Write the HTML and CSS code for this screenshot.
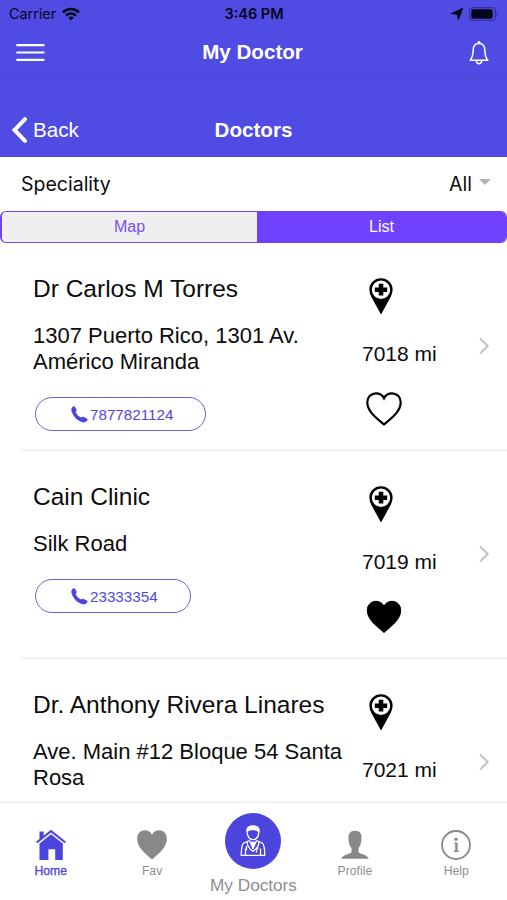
FILE: index.html
```html
<!DOCTYPE html>
<html lang="en">
<head>
  <meta charset="UTF-8" />
  <meta name="viewport" content="width=device-width, initial-scale=1.0" />
  <title>My Doctor</title>
  <link rel="stylesheet" href="styles.css">
</head>
<body>

  <!-- Shared icons -->
  <svg class="sprite" width="0" height="0">
    <symbol id="pin" viewBox="0 0 24 37">
      <path fill-rule="evenodd" d="M12 .3C5.4.3.4 5.200.4 11.600c0 2.700.8 4.900 2.100 7.600L12 36.500l9.500-17.300c1.300-2.700 2.100-4.900 2.100-7.600C23.600 5.200 18.600.3 12 .3zM12 2.500a9.200 9.200 0 1 1 0 18.400a9.200 9.200 0 1 1 0-18.400z"/>
      <path d="M9.700 5.700h4.600v3.700h3.900v4.500h-3.900v3.700H9.700v-3.700H5.800V9.400h3.900z"/>
    </symbol>
    <symbol id="heart" viewBox="0 0 36 34">
      <path d="M18 32.500C10 25.500 1.300 19.500 1.300 10.300C1.300 5 5.200 1.300 10 1.300C13.300 1.300 16.500 3 18 6.200C19.500 3 22.700 1.300 26 1.300C30.800 1.300 34.700 5 34.700 10.300C34.700 19.500 26 25.500 18 32.500z"/>
    </symbol>
    <symbol id="phone" viewBox="0 0 17 17">
      <path d="M1.200 1.200C2.300.2 3.400 0 4 .8l1.500 2.700c.4.900.1 1.500-.8 2.300c.7 2.500 2.800 4.600 5.600 5.800c.9-1 1.600-1.100 2.400-.7l3.100 1.500c1 .6 1 1.300.4 2.200c-1 1.500-2.700 2.200-4.600 1.700C6.200 14.800 1.700 10.200.4 4.500C.2 3.200.4 2 1.200 1.200z"/>
    </symbol>
    <symbol id="chevron" viewBox="0 0 10 18">
      <path d="M1 1.500L8.700 9L1 16.500" fill="none" stroke="#c4c4c6" stroke-width="2"/>
    </symbol>
  </svg>

  <header>
    <div class="status">
      <div class="carrier">
        <span>Carrier</span>
        <svg width="18" height="14" viewBox="0 0 18 14" fill="none" stroke="#07071c" stroke-width="2.500">
          <path d="M1 5.300C5.500.9 12.500.9 17 5.300"/>
          <path d="M4 8.500C6.800 5.800 11.200 5.800 14 8.500"/>
          <path d="M6.200 10.600C7.800 9.100 10.200 9.100 11.800 10.600L9 13.500z" fill="#07071c" stroke="none"/>
        </svg>
      </div>
      <strong>3:46 PM</strong>
      <div class="battery">
        <svg width="12" height="12" viewBox="0 0 12 12"><path d="M11.800.2L7.400 11.700L6 6.300L.3 5.600z" fill="#07071c" stroke="#07071c" stroke-width=".8" stroke-linejoin="round"/></svg>
        <svg width="30" height="14" viewBox="0 0 30 14">
          <rect x=".6" y=".6" width="25.800" height="12.800" rx="3.500" fill="none" stroke="#3530a0" stroke-width="1.200"/>
          <rect x="2.300" y="2.300" width="21.400" height="9.400" rx="1.800" fill="#07071c"/>
          <path d="M27.800 4.800c1.700.7 1.700 3.700 0 4.400z" fill="#3530a0"/>
        </svg>
      </div>
    </div>

    <div class="topbar">
      <svg width="29" height="19" viewBox="0 0 29 19" stroke="#fff" stroke-width="2.200" stroke-linecap="round"><path d="M1.200 2.200h26.400M1.200 9.500h26.400M1.200 16.800h26.400"/></svg>
      <h1>My Doctor</h1>
      <svg class="bell" width="20" height="24" viewBox="0 0 20 24" fill="none" stroke="#fff" stroke-width="1.500" stroke-linejoin="round">
        <path d="M10 2.400C6 2.400 4.300 5.300 4.200 9C4.100 14 3.400 16.500 1.200 19.300h17.600C16.600 16.500 15.900 14 15.800 9C15.700 5.300 14 2.400 10 2.400z"/>
        <path d="M9.300 2.200V1.100h1.400v1.100M7.400 20c.2 3.600 5 3.600 5.200 0"/>
      </svg>
    </div>

    <div class="subbar">
      <a href="#" class="back">
        <svg width="16" height="26" viewBox="0 0 16 26"><path d="M14 2.200L3.500 13l10.500 10.800" fill="none" stroke="#fff" stroke-width="4" stroke-linecap="round"/></svg>
        <span>Back</span>
      </a>
      <h2>Doctors</h2>
    </div>
  </header>

  <div class="filter">
    <span>Speciality</span>
    <div class="select">All</div>
  </div>

  <div class="segment">
    <button>Map</button>
    <button class="active">List</button>
  </div>

  <main>
    <article class="doctor">
      <div class="info">
        <h3>Dr Carlos M Torres</h3>
        <p>1307 Puerto Rico, 1301 Av. Américo Miranda</p>
        <a href="#" class="call"><svg width="17" height="17"><use href="#phone"/></svg>7877821124</a>
      </div>
      <div class="place">
        <svg class="pin" width="24" height="37"><use href="#pin"/></svg>
        <span>7018 mi</span>
        <svg class="heart outline" width="36" height="34"><use href="#heart"/></svg>
      </div>
      <svg class="chevron" width="10" height="18"><use href="#chevron"/></svg>
    </article>

    <article class="doctor">
      <div class="info">
        <h3>Cain Clinic</h3>
        <p>Silk Road</p>
        <a href="#" class="call"><svg width="17" height="17"><use href="#phone"/></svg>23333354</a>
      </div>
      <div class="place">
        <svg class="pin" width="24" height="37"><use href="#pin"/></svg>
        <span>7019 mi</span>
        <svg class="heart" width="36" height="34"><use href="#heart"/></svg>
      </div>
      <svg class="chevron" width="10" height="18"><use href="#chevron"/></svg>
    </article>

    <article class="doctor">
      <div class="info">
        <h3>Dr. Anthony Rivera Linares</h3>
        <p>Ave. Main #12 Bloque 54 Santa Rosa</p>
      </div>
      <div class="place">
        <svg class="pin" width="24" height="37"><use href="#pin"/></svg>
        <span>7021 mi</span>
      </div>
      <svg class="chevron" width="10" height="18"><use href="#chevron"/></svg>
    </article>
  </main>

  <nav class="tabs">
    <a href="#" class="current">
      <svg width="32" height="32" viewBox="0 0 32 32" fill="#4b45de">
        <path d="M4.500 2.600h4.200v5L4.500 11.300z"/>
        <path d="M16 .8L31 12.800l-1.300 1.500L16 3.600L2.300 14.300L1 12.800z"/>
        <path d="M16 5.200l11.800 9.300V31h-7.600V20.200h-6.800V31H4.500V14.500z"/>
      </svg>
      <span>Home</span>
    </a>
    <a href="#">
      <svg width="32" height="32" viewBox="0 0 36 34" preserveAspectRatio="none" fill="#888"><use href="#heart" width="36" height="34"/></svg>
      <span>Fav</span>
    </a>
    <a href="#" class="main-tab">
      <div class="circle">
        <svg width="26" height="34" viewBox="0 0 26 34" fill="none" stroke="#fff" stroke-width="1.300" stroke-linejoin="round">
          <path d="M7 6.500C6 .2 20 .2 19 6.500L18.600 10c-1 4.500-3.200 5.700-5.600 5.700S8.400 14.500 7.400 10z"/>
          <path d="M7.200 7.500C7 1 19 1 18.800 7.500C16.800 4.800 14 5.600 11.600 5.500C9.500 5.400 8 6 7.200 7.500z" fill="#fff"/>
          <path d="M9.500 16.500L3.800 19C1.800 20.200 1.300 25 1.200 31.300h23.600C24.700 25 24.200 20.200 22.200 19l-5.700-2.500"/>
          <path d="M9.500 16.500l3.500 8l3.500-8M7.300 17.800c-.5 4 1.500 6.500 5.700 9.500c4.200-3 6.200-5.500 5.700-9.500M5.500 24.500v6.500M20.500 24.500v6.500"/>
          <path d="M11.300 18.500h3.400L13 24z" fill="#fff"/>
          <path d="M6.500 22v4.300M18.500 23.500c-2 1-2.300 3-2 5"/>
        </svg>
      </div>
      <span>My Doctors</span>
    </a>
    <a href="#">
      <svg width="32" height="32" viewBox="0 0 32 32" fill="#888">
        <path d="M16 1.800c-4.800 0-6.900 3.400-6.500 7.600C9.700 13.500 10.400 17 12.500 19v4.200c-1 1.700-8.900 2.400-10.300 6.600H29.800C28.400 25.600 20.500 24.900 19.500 23.200V19c2.100-2 2.800-5.500 3-9.600C22.900 5.200 20.800 1.800 16 1.800z"/>
      </svg>
      <span>Profile</span>
    </a>
    <a href="#">
      <svg width="32" height="32" viewBox="0 0 32 32" fill="#888">
        <circle cx="16" cy="16" r="14" fill="none" stroke="#888" stroke-width="1.800"/>
        <circle cx="16" cy="10.200" r="1.700"/>
        <path d="M13.900 13.400h3.700v8.300h1.300v1.200h-5v-1.200h1.300v-7.100h-1.300z"/>
      </svg>
      <span>Help</span>
    </a>
  </nav>

</body>
</html>
```
FILE: styles.css
```css
* { box-sizing: border-box; margin: 0; padding: 0; }

body {
  font-family: 'Liberation Sans', Arial, sans-serif;
  background: white;
  color: #0c0c0c;
  height: 100vh;
  display: flex;
  flex-direction: column;
  overflow: hidden;
}

a { text-decoration: none; }
svg { display: block; flex-shrink: 0; }
.sprite { position: absolute; }

/* Header */
header {
  background-color: #504be2;
  color: white;
  height: 157px;
  flex-shrink: 0;
}

.status {
  display: grid;
  grid-template-columns: 1fr auto 1fr;
  align-items: center;
  height: 27px;
  padding: 0 8px 0 9px;
  color: #07071c;
  font-family: Inter, sans-serif;
  font-size: 14.4px;
}

.status strong { font-weight: 600; font-size: 14.5px; }

.carrier, .battery {
  display: flex;
  align-items: center;
  gap: 6px;
}

.battery { justify-content: flex-end; }

.topbar {
  display: grid;
  grid-template-columns: 1fr auto 1fr;
  align-items: center;
  height: 52px;
  padding: 0 18px 0 16px;
  border-bottom: 1px solid #4a45d5;
}

.bell { justify-self: end; }

h1, h2 { font-size: 20.6px; margin-top: -2px; }

.subbar {
  display: grid;
  grid-template-columns: 1fr auto 1fr;
  align-items: center;
  height: 78px;
  padding: 25px 11px 0 11px;
}

.back {
  display: flex;
  align-items: center;
  gap: 6px;
  margin-top: -2px;
  color: white;
  font-size: 20.6px;
}

/* Speciality filter */
.filter {
  display: flex;
  align-items: center;
  justify-content: space-between;
  height: 54px;
  flex-shrink: 0;
  padding: 0 16px 0 21px;
  font-family: Inter, sans-serif;
  font-size: 19.5px;
}

.select {
  display: flex;
  align-items: center;
  gap: 7px;
}

.select::after {
  content: "";
  border: 6px solid transparent;
  border-top-color: #b3b3b3;
  border-bottom: none;
  margin-top: -5px;
}

.segment {
  display: grid;
  grid-template-columns: 255px 1fr;
  height: 32px;
  flex-shrink: 0;
  border: 1px solid #7042ff;
  border-left-width: 2px;
  border-radius: 6px;
  overflow: hidden;
}

.segment button {
  border: none;
  background-color: #efefef;
  color: #7a50f5;
  font-family: inherit;
  font-size: 16px;
}

.segment .active {
  background-color: #7042ff;
  color: white;
}

/* Doctor list */
main {
  flex: 1;
  min-height: 0;
  overflow: hidden;
}

.doctor {
  display: flex;
  height: 208px;
  margin-left: 21px;
  padding: 31px 18px 0 12px;
  border-bottom: 2px solid #f2f2f2;
}

.info { width: 329px; }

.info h3 {
  font-size: 24.5px;
  font-weight: normal;
  line-height: 29px;
}

.info p {
  width: 312px;
  margin-top: 20px;
  font-size: 22px;
  line-height: 26px;
}

.call {
  display: inline-flex;
  align-items: center;
  gap: 2px;
  height: 34px;
  margin: 22px 0 0 2px;
  padding: 0 32px 0 35px;
  border: 1.5px solid #6a62dc;
  border-radius: 17px;
  color: #5049dc;
  font-size: 15.2px;
}

.call svg { fill: #4b45de; }

.place {
  display: flex;
  flex-direction: column;
  flex: 1;
}

.place span { font-size: 21px; line-height: 26px; }

.pin { margin: 4px 0 26px 7px; }
.heart { margin: 25px 0 0 4px; stroke: black; }

.outline {
  fill: none;
  stroke-width: 2.2;
}

.chevron { margin-top: 63px; }

/* Bottom tabs */
.tabs {
  display: grid;
  grid-template-columns: repeat(5, 1fr);
  height: 99px;
  flex-shrink: 0;
  background: white;
  border-top: 2px solid #f2f2f2;
}

.tabs a {
  display: flex;
  flex-direction: column;
  align-items: center;
  padding-top: 26px;
  color: #8e8e8e;
  font-size: 12.2px;
}

.tabs a span { margin-top: 3px; white-space: nowrap; }

.tabs .current {
  color: #4b45de;
  -webkit-text-stroke: 0.3px #4b45de;
}

.tabs .main-tab {
  padding-top: 10px;
  font-size: 17.2px;
}

.main-tab span { line-height: 20px; }

.tabs .main-tab span { margin-top: 6px; }

.circle {
  display: flex;
  align-items: center;
  justify-content: center;
  width: 56px;
  height: 56px;
  border-radius: 50%;
  background-color: #4b45de;
}
```
